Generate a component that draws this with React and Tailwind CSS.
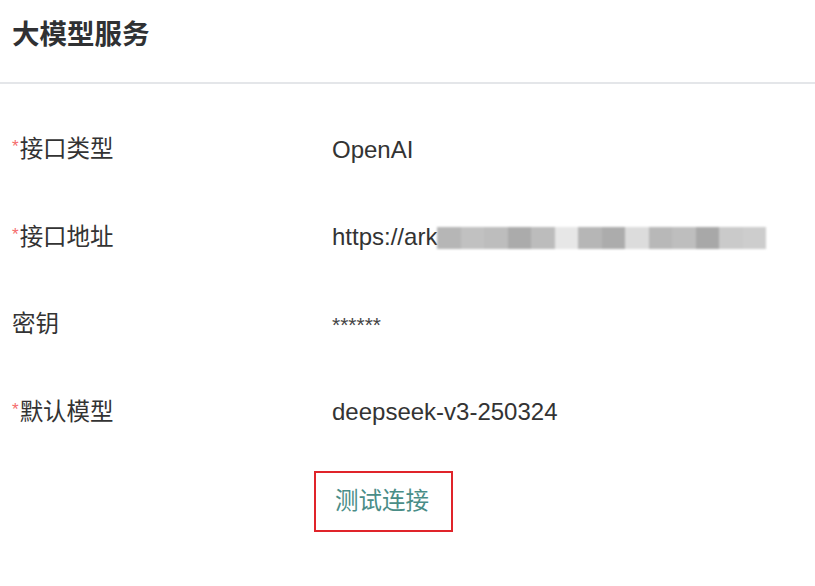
const BLUR = [
  '#b6b6b6', '#c1c1c1', '#bdbdbd', '#ababab', '#bcbcbc', '#e7e7e7', '#b6b6b6',
  '#acacac', '#dcdcdc', '#b8b8b8', '#bebebe', '#a8a8a8', '#cacaca', '#cdcdcd'
];

const ROWS = [
  { label: '接口类型', required: true, value: 'OpenAI' },
  { label: '接口地址', required: true, value: 'url' },
  { label: '密钥', required: false, value: '******' },
  { label: '默认模型', required: true, value: 'deepseek-v3-250324' }
];

function UrlValue() {
  return (
    <div className="flex items-center">
      <span>https://ark</span>
      <div className="flex h-[22px] mt-[2px] blur-[1px]">
        {BLUR.map((c, i) => (
          <div key={i} className="w-[23.5px] h-full" style={{ backgroundColor: c }} />
        ))}
      </div>
    </div>
  );
}

export default function App() {
  return (
    <div
      className="w-[815px] h-[586px] bg-white text-[#303133] overflow-hidden"
      style={{ fontFamily: '"Liberation Sans", "Noto Sans CJK SC", sans-serif' }}
    >
      <div className="h-[84px] px-3 pt-[15px] border-b-2 border-[#e4e6e9]">
        <h2 className="text-[27.5px] leading-[40px] font-bold text-[#303133]">大模型服务</h2>
      </div>

      <div className="pt-[22px]">
        {ROWS.map((r) => (
          <div key={r.label} className="h-[87.5px] flex items-center">
            <div className="w-[332px] pl-3 text-[23.5px] flex items-center text-[#333]">
              {r.required && <span className="text-[#f56c6c] text-[17px] self-start mt-[2px] mr-[1px]">*</span>}
              <span>{r.label}</span>
            </div>
            <div className={r.value === '******' ? 'text-[21px] text-[#444]' : 'text-[24px] text-[#333]'}>
              {r.value === 'url' ? <UrlValue /> : r.value}
            </div>
          </div>
        ))}

        <div className="pl-[314px] mt-[15px]">
          <button className="w-[139px] h-[61px] border-2 border-[#e0242a] text-[#4a8d87] text-[23.5px] flex items-center justify-center pr-[3px]">
            测试连接
          </button>
        </div>
      </div>
    </div>
  );
}
